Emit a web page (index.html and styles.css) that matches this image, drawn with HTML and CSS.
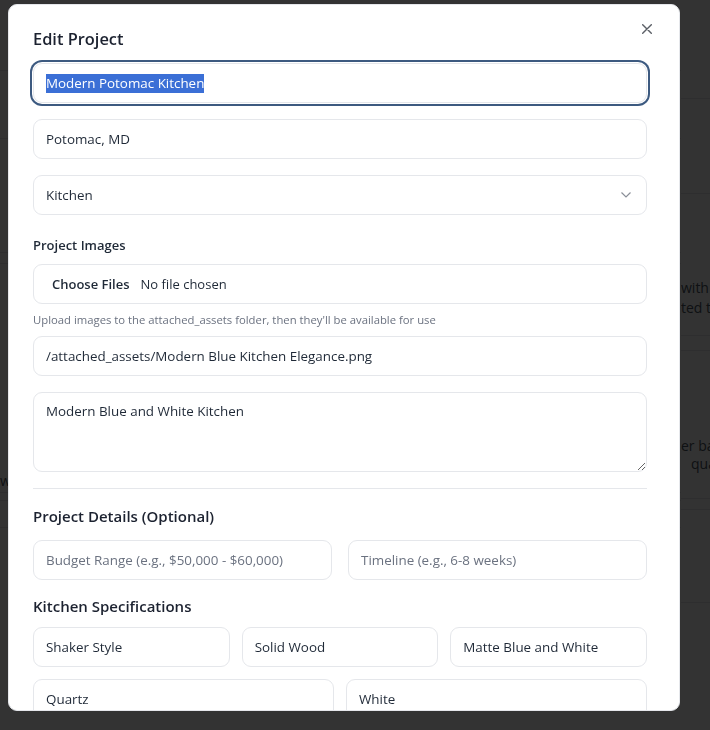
FILE: index.html
```html
<!DOCTYPE html>
<html lang="en">
<head>
<meta charset="utf-8">
<title>Edit Project</title>
<link rel="stylesheet" href="styles.css">
</head>
<body>
<div class="page">
  <div class="page-left">
    <div class="pl pl-1"></div>
    <div class="pl pl-2"></div>
    <div class="pl pl-3"></div>
    <div class="pl pl-4"></div>
    <div class="pl pl-5"><p class="bg-text">wood cabinetry throughout</p></div>
    <div class="pl pl-6"></div>
    <div class="pl pl-7"></div>
  </div>
  <div class="page-right">
    <div class="pr pr-1"></div>
    <div class="pr pr-2"></div>
    <div class="pr pr-3"><p class="bg-text">with c</p><p class="bg-text">ted th</p></div>
    <div class="pr pr-4"></div>
    <div class="pr pr-5"><p class="bg-text">er ba</p><p class="bg-text indent">qual</p></div>
    <div class="pr pr-6"></div>
    <div class="pr pr-7"></div>
  </div>
</div>
<div class="overlay"></div>

<div class="modal" role="dialog" aria-labelledby="modal-title">
  <button class="close" type="button" aria-label="Close">
    <svg width="10" height="10" viewBox="0 0 10 10"><path d="M0.7 0.7 L9.3 9.3 M9.3 0.7 L0.7 9.3" stroke="#5b5f66" stroke-width="1.4" stroke-linecap="round" fill="none"/></svg>
  </button>
  <h2 class="title" id="modal-title">Edit Project</h2>

  <div class="stack">
    <div class="field focused"><span class="selected">Modern Potomac Kitchen</span></div>
    <input class="field" type="text" value="Potomac, MD">
    <div class="select-wrap">
      <select class="field select"><option>Kitchen</option></select>
      <svg class="chevron" width="10" height="6" viewBox="0 0 10 6"><path d="M0.5 0.5 L5 5 L9.5 0.5" stroke="#8a8f98" stroke-width="1.2" fill="none"/></svg>
    </div>
  </div>

  <div class="label">Project Images</div>
  <div class="field file"><span class="file-btn">Choose Files</span><span class="file-name">No file chosen</span></div>
  <p class="help">Upload images to the attached_assets folder, then they'll be available for use</p>
  <input class="field" type="text" value="/attached_assets/Modern Blue Kitchen Elegance.png">
  <textarea class="field textarea">Modern Blue and White Kitchen</textarea>

  <section class="details">
    <h3 class="section-title">Project Details (Optional)</h3>
    <div class="grid-2 wide-gap">
      <input class="field" type="text" placeholder="Budget Range (e.g., $50,000 - $60,000)">
      <input class="field" type="text" placeholder="Timeline (e.g., 6-8 weeks)">
    </div>
    <h3 class="section-title spec-title">Kitchen Specifications</h3>
    <div class="grid-3">
      <input class="field" type="text" value="Shaker Style">
      <input class="field" type="text" value="Solid Wood">
      <input class="field" type="text" value="Matte Blue and White">
    </div>
    <div class="grid-2 row-gap">
      <input class="field" type="text" value="Quartz">
      <input class="field" type="text" value="White">
    </div>
  </section>
</div>
</body>
</html>
```

FILE: styles.css
```css
* { box-sizing: border-box; }

html, body {
  margin: 0;
  padding: 0;
  height: 100%;
  overflow: hidden;
}

body {
  font-family: "Open Sans", "Noto Sans", sans-serif;
  background: #ffffff;
}

/* background page (under the overlay) */
.page {
  display: flex;
  width: 710px;
  height: 730px;
}
.page-left { width: 681px; }
.page-right { flex: 1; overflow: hidden; }

.pl, .pr { border-bottom: 1px solid #e5e7eb; overflow: hidden; }
.pl-1 { height: 71px; }
.pl-2 { height: 68px; }
.pl-3 { height: 114px; }
.pl-4 { height: 11px; }
.pl-5 { height: 229px; padding-top: 207px; }
.pl-6 { height: 8px; }
.pl-7 { height: 27px; }

.pr-1 { height: 99px; }
.pr-2 { height: 95px; }
.pr-3 { height: 142px; padding-top: 84px; }
.pr-4 { height: 15px; }
.pr-5 { height: 148px; padding-top: 86px; }
.pr-6 { height: 11px; }
.pr-7 { height: 93px; }

.bg-text {
  margin: 0;
  font-size: 14px;
  line-height: 20px;
  color: #4b5563;
  white-space: nowrap;
}
.pr-5 .bg-text { line-height: 18px; }
.indent { padding-left: 10px; }

.overlay {
  position: fixed;
  inset: 0;
  background: rgba(0, 0, 0, 0.8);
}

/* modal */
.modal {
  position: fixed;
  left: 8px;
  top: 4px;
  width: 672px;
  height: 707px;
  background: #ffffff;
  border: 1px solid #e5e7eb;
  border-radius: 9px;
  padding: 22px 32px 0 24px;
  overflow: hidden;
  color: #1f2937;
}

.close {
  position: absolute;
  top: 19px;
  right: 27px;
  width: 10px;
  height: 10px;
  padding: 0;
  border: 0;
  background: transparent;
  display: flex;
}

.title {
  margin: 0 0 12px;
  font-size: 16.4px;
  line-height: 24px;
  font-weight: 600;
  color: #1c2230;
}

.stack {
  display: flex;
  flex-direction: column;
  gap: 16px;
}

.field {
  display: flex;
  align-items: center;
  width: 100%;
  height: 40px;
  margin: 0;
  padding: 0 12px;
  border: 1px solid #e5e7eb;
  border-radius: 9px;
  background: #ffffff;
  font-family: "Open Sans", "Noto Sans", sans-serif;
  font-size: 13.4px;
  color: #1f2937;
  outline: none;
}
.field::placeholder { color: #6b7280; }

.focused {
  box-shadow: 0 0 0 1px #ffffff, 0 0 0 3px #3d5a80;
}
.selected {
  background: #3b6fd6;
  color: #ffffff;
  line-height: 19px;
}

.select-wrap { position: relative; }
.select {
  -webkit-appearance: none;
  appearance: none;
}
.chevron {
  position: absolute;
  right: 16px;
  top: 17px;
}

.label {
  margin: 20px 0 9px;
  font-size: 13px;
  line-height: 20px;
  font-weight: 600;
  color: #1f2937;
}

.file { padding-left: 18px; gap: 11px; font-size: 13px; }
.file-btn { font-weight: 600; }

.help {
  margin: 8px 0;
  font-size: 11.3px;
  line-height: 16px;
  color: #6b7280;
}

.textarea {
  display: block;
  height: 80px;
  margin-top: 16px;
  padding: 8px 12px;
  line-height: 20px;
  resize: vertical;
}

.details {
  margin-top: 16px;
  padding-top: 15px;
  border-top: 1px solid #e5e7eb;
}

.section-title {
  margin: 0 0 12px;
  font-size: 15px;
  line-height: 24px;
  font-weight: 600;
  color: #1c2230;
}
.spec-title { margin: 14px 0 9px; }

.grid-2 {
  display: grid;
  grid-template-columns: 1fr 1fr;
}
.wide-gap { gap: 16px; }
.row-gap { gap: 12px; margin-top: 12px; }

.grid-3 {
  display: grid;
  grid-template-columns: 1fr 1fr 1fr;
  gap: 12px;
}
```
